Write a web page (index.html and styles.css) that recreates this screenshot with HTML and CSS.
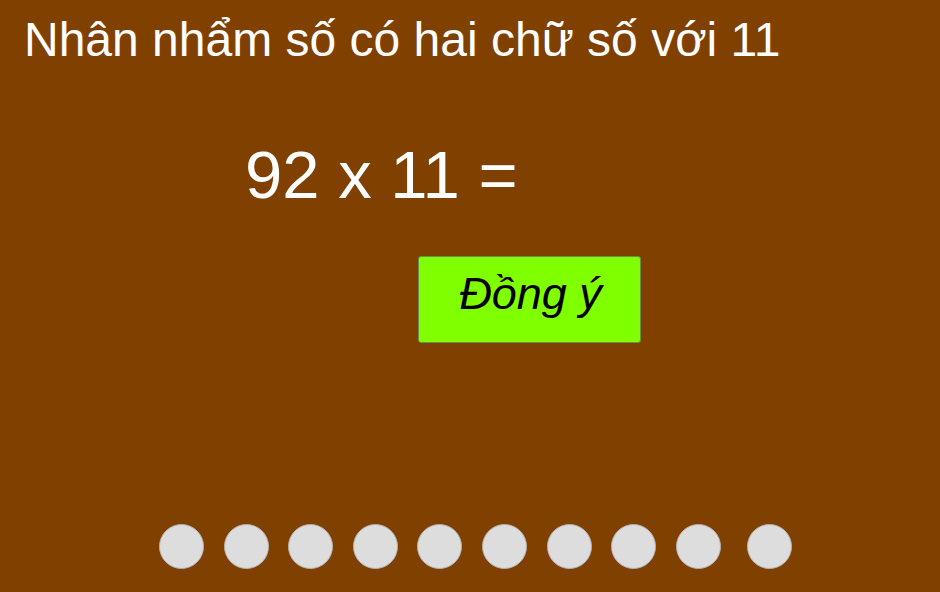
FILE: index.html
```html
<!DOCTYPE html>
<html lang="vi">
<head>
<meta charset="utf-8">
<title>Nhân nhẩm</title>
<link rel="stylesheet" href="styles.css">
</head>
<body>
<div class="page">
  <h1 class="title">Nhân nhẩm số có hai chữ số với 11</h1>
  <div class="question">92 x 11 =</div>
  <div class="actions"><button class="ok">Đồng ý</button></div>
  <div class="dots">
    <span class="dot"></span><span class="dot"></span><span class="dot"></span><span class="dot"></span><span class="dot"></span><span class="dot"></span><span class="dot"></span><span class="dot"></span><span class="dot"></span><span class="dot last"></span>
  </div>
</div>
</body>
</html>
```
FILE: styles.css
```css
html, body {
  margin: 0;
  padding: 0;
  background: #804000;
}
.page {
  width: 940px;
  height: 592px;
  display: flex;
  flex-direction: column;
  font-family: "Liberation Sans", Arial, sans-serif;
  color: #fff;
  box-sizing: border-box;
}
.title {
  margin: 0;
  padding: 12px 0 0 24px;
  font-size: 48px;
  font-weight: normal;
  line-height: 56px;
}
.question {
  margin-top: 69px;
  padding-left: 245px;
  font-size: 67px;
  line-height: 75px;
}
.actions {
  margin-top: 44px;
  padding-left: 418px;
}
.ok {
  width: 223px;
  height: 87px;
  background: #80ff00;
  border: 1px solid #6c8c50;
  border-radius: 3px;
  font-family: "Liberation Sans", Arial, sans-serif;
  font-style: italic;
  font-size: 45px;
  color: #000;
  padding: 0 0 12px 2px;
}
.dots {
  margin-top: auto;
  margin-bottom: 23px;
  padding-left: 159px;
  display: flex;
  gap: 19.6px;
}
.dot {
  width: 43px;
  height: 43px;
  border-radius: 50%;
  background: #dddddd;
  border: 1px solid #b4b4b4;
  box-sizing: content-box;
}
.dot.last {
  margin-left: 6.7px;
}
```
